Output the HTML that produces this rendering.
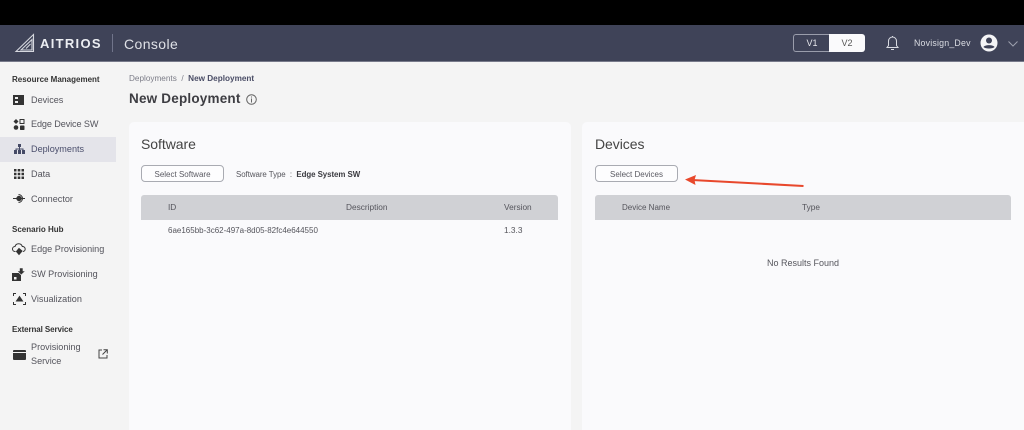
<!DOCTYPE html>
<html lang="en">
<head>
<meta charset="utf-8">
<title>AITRIOS Console</title>
<style>
html,body{margin:0;padding:0;width:1024px;height:430px;overflow:hidden}
body{background:#f4f4f4;font-family:"Liberation Sans",sans-serif;color:#4a4a50}
#w{position:relative;width:1024px;height:430px;overflow:hidden;background:#f4f4f4;filter:blur(.35px)}
.a{position:absolute;white-space:nowrap}
#top{left:0;top:0;width:1024px;height:25px;background:#000}
#hdr{left:0;top:25px;width:1024px;height:36px;background:#3f4358;border-bottom:1px solid #777a8a}
.nav{font-size:9.1px;color:#54545c;left:31px;line-height:12px}
.sec{font-size:8px;font-weight:bold;color:#333;left:12px;line-height:10px}
.panel{background:#fafafc;border-radius:5px;top:122px;height:320px}
.h2{font-size:14px;color:#444;line-height:18px;top:135px;letter-spacing:-.05px}
.btn{top:165px;height:15px;border:1px solid #a9abb2;border-radius:4px;background:#fdfdfe;font-size:8px;color:#5a5a62;text-align:center;line-height:17px}
.th{top:195px;height:25px;background:#d0d1d5}
.t{font-size:8.300px;color:#55555c;line-height:12px}
svg{position:absolute;overflow:visible}
</style>
</head>
<body>
<div id="w">
<div class="a" id="top"></div>
<div class="a" id="hdr"></div>

<svg style="left:15px;top:33px" width="20" height="20" viewBox="0 0 20 20" fill="none" stroke="#d6d8df" stroke-width="1.100"><path d="M1 18.500 18.500 1.500V18.500Z"/><path d="M6 17 17 6.500V17Z"/><path d="M11 15.500 15.500 11"/></svg>
<div class="a" style="left:40px;top:35px;font-size:13px;font-weight:bold;letter-spacing:1.300px;color:#eceef2;line-height:18px">AITRIOS</div>
<div class="a" style="left:112px;top:34px;width:1px;height:18px;background:#70748a"></div>
<div class="a" style="left:124px;top:35px;font-size:14px;letter-spacing:.400px;color:#dfe1e7;line-height:18px">Console</div>

<div class="a" style="left:793px;top:34px;width:36px;height:16px;border:1px solid #9a9dab;border-right:0;border-radius:3px 0 0 3px;color:#e6e7ec;font-size:9px;text-align:center;line-height:16px">V1</div>
<div class="a" style="left:829px;top:34px;width:36px;height:18px;background:#fafafc;border-radius:0 3px 3px 0;color:#555;font-size:9px;text-align:center;line-height:18px">V2</div>
<svg style="left:886px;top:35px" width="13" height="16" viewBox="0 0 13 16" fill="none" stroke="#d9dbe2" stroke-width="1"><path d="M1 12.500H12L10.500 10.500V6A4 4 0 0 0 2.500 6V10.500Z"/><path d="M5 14.500H8"/><path d="M6.500 1V2"/></svg>
<div class="a" style="left:914px;top:37px;font-size:8.800px;color:#dcdee4;line-height:12px;letter-spacing:.200px">Novisign_Dev</div>
<svg style="left:980px;top:34px" width="18" height="18" viewBox="0 0 18 18"><circle cx="9" cy="9" r="8.500" fill="#f4f4f6"/><circle cx="9" cy="6.500" r="3" fill="#3f4358"/><path d="M3.500 13C5 10.500 13 10.500 14.500 13 13 15 5 15 3.500 13Z" fill="#3f4358"/></svg>
<svg style="left:1008px;top:41px" width="10" height="6" viewBox="0 0 10 6" fill="none" stroke="#9da0ae" stroke-width="1"><path d="M.5.500 5 5 9.500.500"/></svg>

<div class="a sec" style="top:75px">Resource Management</div>
<svg style="left:13px;top:95px" width="11" height="10" viewBox="0 0 11 10"><rect width="11" height="10" fill="#333"/><rect x="2" y="2" width="3" height="2" fill="#eee"/><rect x="2" y="6" width="3" height="2" fill="#eee"/></svg>
<div class="a nav" style="top:94px">Devices</div>
<svg style="left:13px;top:119px" width="12" height="11" viewBox="0 0 12 11" fill="#333"><path d="M3 0 5.500 2.500 3 5 .5 2.500Z"/><rect x="7" y=".5" width="4" height="4" fill="none" stroke="#333"/><circle cx="3" cy="8.500" r="2.300"/><rect x="7" y="6.500" width="4.500" height="4.500" rx=".8"/></svg>
<div class="a nav" style="top:118px;letter-spacing:-.1px">Edge Device SW</div>

<div class="a" style="left:0;top:137px;width:116px;height:25px;background:#e4e4ea"></div>
<svg style="left:14px;top:144px" width="11" height="10" viewBox="0 0 11 10" fill="#454a66"><rect x="4" y="0" width="3" height="3"/><rect x="0" y="6" width="3" height="4"/><rect x="4" y="6" width="3" height="4"/><rect x="8" y="6" width="3" height="4"/><path d="M5 3h1v1.500h3.500V6h-1V5.500h-2.500V6h-1V5.500H2.500V6h-1V4.500H5Z"/></svg>
<div class="a nav" style="top:143px;color:#4a4e6c">Deployments</div>

<svg style="left:14px;top:169px" width="10" height="10" viewBox="0 0 10 10" fill="#333"><path d="M0 0h2.500v2.500H0zM3.700 0h2.600v2.500H3.700zM7.500 0H10v2.500H7.500zM0 3.700h2.500v2.600H0zM3.700 3.700h2.600v2.600H3.700zM7.500 3.700H10v2.600H7.500zM0 7.500h2.500V10H0zM3.700 7.500h2.600V10H3.700zM7.500 7.500H10V10H7.500z"/></svg>
<div class="a nav" style="top:168px">Data</div>

<svg style="left:13px;top:193px" width="12" height="11" viewBox="0 0 12 11" fill="none" stroke="#333"><path d="M5.500 1.500A4 4 0 1 1 5.500 9.500"/><circle cx="6" cy="5.500" r="2.200" fill="#333"/><path d="M0 5.500H4M8 5.500H12"/></svg>
<div class="a nav" style="top:193px">Connector</div>

<div class="a sec" style="top:225px">Scenario Hub</div>
<svg style="left:12px;top:243px" width="14" height="13" viewBox="0 0 14 13" fill="none" stroke="#333"><path d="M3.500 8.500H3A2.500 2.500 0 0 1 3 3.500 3.800 3.800 0 0 1 10.300 3.500 2.500 2.500 0 0 1 11 8.500"/><path d="M7 5.500 10 8 7 11.500 4.500 8.500Z" fill="#333"/></svg>
<div class="a nav" style="top:243px">Edge Provisioning</div>
<svg style="left:12px;top:268px" width="14" height="13" viewBox="0 0 14 13" fill="#333"><rect x="0" y="5" width="9" height="8"/><path d="M7.500 0H11V3H13.500L9.250 7 5 3H7.500Z" stroke="#f4f4f4" stroke-width=".6"/><rect x="2" y="9" width="2.500" height="2.500" fill="#f4f4f4"/></svg>
<div class="a nav" style="top:268px">SW Provisioning</div>
<svg style="left:13px;top:293px" width="13" height="12" viewBox="0 0 13 12" fill="none" stroke="#333"><path d="M.5 3V.5H3M10 .5H12.500V3M12.500 9V11.500H10M3 11.500H.5V9"/><path d="M6.500 3.500 9.500 8H3.500Z" fill="#333"/></svg>
<div class="a nav" style="top:293px">Visualization</div>

<div class="a sec" style="top:325px;letter-spacing:-.1px">External Service</div>
<svg style="left:13px;top:350px" width="13" height="10" viewBox="0 0 13 10"><rect width="13" height="10" rx="1" fill="#333"/><rect y="2" width="13" height="1" fill="#f4f4f4"/></svg>
<div class="a nav" style="top:341px;line-height:13.500px">Provisioning<br>Service</div>
<svg style="left:98px;top:349px" width="10" height="10" viewBox="0 0 10 10" fill="none" stroke="#444"><path d="M4 1H1V9H9V6"/><path d="M5.500.7H9.300V4.500M9 1 4.500 5.500"/></svg>

<div class="a" style="left:129px;top:73px;font-size:8.200px;line-height:12px;color:#7c7d88">Deployments&nbsp; /&nbsp; <b style="color:#4a4d66">New Deployment</b></div>
<div class="a" style="left:129px;top:90px;font-size:13.500px;font-weight:bold;color:#3d3d42;line-height:18px;letter-spacing:.2px">New Deployment</div>
<svg style="left:246px;top:94px" width="11" height="11" viewBox="0 0 11 11" fill="none" stroke="#666"><circle cx="5.500" cy="5.500" r="4.800"/><path d="M5.500 4.500V8.500M5.500 2.500V3.500"/></svg>

<div class="a panel" style="left:129px;width:442px"></div>
<div class="a panel" style="left:582px;width:450px"></div>

<div class="a h2" style="left:141px">Software</div>
<div class="a btn" style="left:141px;width:81px">Select Software</div>
<div class="a t" style="left:236px;top:169px;font-size:7.900px;letter-spacing:-.05px">Software Type&nbsp; :&nbsp; <b style="color:#3a3a40">Edge System SW</b></div>
<div class="a th" style="left:141px;width:417px;border-radius:3px 3px 0 0"></div>
<div class="a t" style="left:168px;top:201px">ID</div>
<div class="a t" style="left:346px;top:201px">Description</div>
<div class="a t" style="left:504px;top:201px">Version</div>
<div class="a t" style="left:168px;top:225px;font-size:8px">6ae165bb-3c62-497a-8d05-82fc4e644550</div>
<div class="a t" style="left:504px;top:224px">1.3.3</div>

<div class="a h2" style="left:595px">Devices</div>
<div class="a btn" style="left:595px;width:81px">Select Devices</div>
<div class="a th" style="left:595px;width:416px;border-radius:3px 3px 0 0"></div>
<div class="a t" style="left:622px;top:202px;font-size:8px">Device Name</div>
<div class="a t" style="left:802px;top:201px">Type</div>
<div class="a t" style="left:767px;top:257px;font-size:9px">No Results Found</div>

<svg style="left:680px;top:170px" width="130" height="22" viewBox="0 0 130 22"><path d="M12 10 123.500 16" stroke="#e8482c" stroke-width="2" fill="none"/><path d="M5 9.500 16 5 14.500 10 15.500 15Z" fill="#e8482c"/></svg>
</div>
</body>
</html>
